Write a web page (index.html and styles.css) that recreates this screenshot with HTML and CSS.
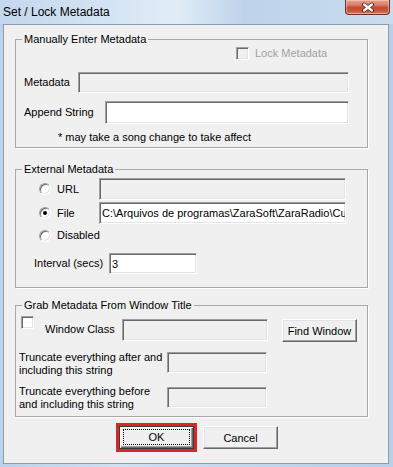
FILE: index.html
```html
<!DOCTYPE html>
<html lang="en">
<head>
  <meta charset="UTF-8">
  <meta name="viewport" content="width=device-width, initial-scale=1.0">
  <title>Set / Lock Metadata</title>
  <link rel="stylesheet" href="styles.css">
</head>
<body>
  <div class="window">
    <div class="titlebar">
      <span class="title">Set / Lock Metadata</span>
      <span class="close">
        <svg width="14" height="11" viewBox="-7 -5.5 14 11">
          <path d="M-4 -3 L4 3 M4 -3 L-4 3" stroke="#5a2b22" stroke-width="4" stroke-linecap="round"/>
          <path d="M-4 -3 L4 3 M4 -3 L-4 3" stroke="#fff" stroke-width="2.2" stroke-linecap="round"/>
        </svg>
      </span>
    </div>

    <div class="client">
      <fieldset class="group g-manual">
        <legend>Manually Enter Metadata</legend>
        <div class="lock-row">
          <span class="check disabled"></span>
          <span class="dim">Lock Metadata</span>
        </div>
        <div class="row meta-row">
          <label>Metadata</label>
          <input class="edit off w-meta" type="text" readonly>
        </div>
        <div class="row append-row">
          <label>Append String</label>
          <input class="edit w-append" type="text">
        </div>
        <div class="note">* may take a song change to take affect</div>
      </fieldset>

      <fieldset class="group g-external">
        <legend>External Metadata</legend>
        <div class="row opt-row">
          <span class="radio"></span>
          <label class="opt">URL</label>
          <input class="edit off w-path" type="text" readonly>
        </div>
        <div class="row opt-row">
          <span class="radio on"></span>
          <label class="opt">File</label>
          <input class="edit w-path" type="text" value="C:\Arquivos de programas\ZaraSoft\ZaraRadio\Current.txt">
        </div>
        <div class="row opt-row small">
          <span class="radio"></span>
          <label class="opt">Disabled</label>
        </div>
        <div class="row interval-row">
          <label class="lbl-interval">Interval (secs)</label>
          <input class="edit w-interval" type="text" value="3">
        </div>
      </fieldset>

      <fieldset class="group g-grab">
        <legend>Grab Metadata From Window Title</legend>
        <div class="grab-row class-row">
          <span class="check"></span>
          <label class="lbl-class">Window Class</label>
          <input class="edit off w-class" type="text" readonly>
          <button class="btn find" type="button">Find Window</button>
        </div>
        <div class="grab-row trunc-row">
          <label class="lbl-trunc">Truncate everything after and<br>including this string</label>
          <input class="edit off w-trunc" type="text" readonly>
        </div>
        <div class="grab-row trunc-row">
          <label class="lbl-trunc">Truncate everything before<br>and including this string</label>
          <input class="edit off w-trunc low" type="text" readonly>
        </div>
      </fieldset>

      <div class="actions">
        <span class="highlight">
          <button class="btn default" type="button"><span class="focus">OK</span></button>
        </span>
        <button class="btn" type="button">Cancel</button>
      </div>
    </div>
  </div>
</body>
</html>
```

FILE: styles.css
```css
html, body { margin: 0; padding: 0; }
body { width: 393px; height: 467px; overflow: hidden; font-family: "Liberation Sans", Arial, sans-serif; font-size: 11px; color: #000; }

.window { height: 467px; display: flex; flex-direction: column; background: linear-gradient(to right, #bcd2ea, #cfe0f2 30%, #c4d8ee 60%, #b8cfe8); }
.titlebar { height: 24px; flex: none; display: flex; align-items: flex-start; justify-content: space-between; background: linear-gradient(to right, #c3d7ed 0%, #d3e3f3 25%, #e1ecf7 45%, #bed3ea 62%, #c9dcef 100%); }
.title { font-family: "Liberation Sans", Arial, sans-serif; font-size: 12px; padding: 5px 0 0 3px; color: #000; }
.close { width: 43px; height: 14px; margin-right: 3px; display: flex; align-items: center; justify-content: center; border: 1px solid #6b3228; border-top: none; border-radius: 0 0 4px 4px; background: linear-gradient(to bottom, #e8a594 0%, #d77d69 35%, #c24a31 55%, #c8573c 80%, #e0806a 100%); box-shadow: inset 0 0 0 1px rgba(255,220,210,0.45); }

.client { flex: 1; margin: 0 4px 3px 3px; border: 1px solid #8a9db3; background: #f0f0f0; padding: 0 20px 0 11px; display: flex; flex-direction: column; }

.group { margin: 0; padding: 0; border: 1px solid #a8a8a8; box-shadow: 1px 1px 0 #fff; min-width: 0; }
.group legend { padding: 0 2px; line-height: 13px; }
.g-manual { margin-top: 8px; padding: 0 18px 3px 8px; }
.g-manual legend { margin-left: -2px; }
.g-external { margin-top: 15px; padding: 0 21px 13px 18px; }
.g-external legend { margin-left: -12px; }
.g-grab { margin-top: 11px; padding: 0 10px 6px 3px; }
.g-grab legend { margin-left: 3px; }

.row { display: flex; align-items: center; }
label { line-height: 13px; white-space: nowrap; }

.lock-row { display: flex; align-items: center; height: 13px; margin-top: 1px; padding-left: 212px; }
.lock-row .check { margin-right: 6px; }
.dim { color: #a0a0a0; line-height: 13px; }

.meta-row { height: 21px; margin-top: 12px; }
.append-row { height: 23px; margin-top: 8px; }
.note { margin-top: 7px; line-height: 13px; padding-left: 34px; }

.edit { box-sizing: border-box; margin: 0; padding: 0 0 0 2px; font: inherit; font-size: 11px; color: #000; background: #fff; border: 1px solid; border-color: #a0a0a0 #fff #fff #a0a0a0; box-shadow: inset 1px 1px 0 #696969, inset -1px -1px 0 #e3e3e3; outline: none; }
.edit.off { background: #f0f0f0; }
.w-meta { width: 271px; height: 21px; margin-left: auto; }
.w-append { width: 244px; height: 23px; margin-left: auto; }
.w-path { width: 247px; height: 22px; margin-left: auto; }
.w-interval { width: 88px; height: 21px; }

.opt-row { height: 22px; margin-top: 2px; padding-left: 5px; }
.opt-row.small { height: 13px; margin-top: 5px; }
.opt { margin-left: 6px; }
.interval-row { height: 21px; margin-top: 11px; }
.lbl-interval { width: 75px; }

.radio { position: relative; box-sizing: border-box; width: 12px; height: 12px; flex: none; border-radius: 50%; background: #fff; border: 1px solid; border-color: #a0a0a0 #fff #fff #a0a0a0; box-shadow: inset 1px 1px 0 #696969, inset -1px -1px 0 #e3e3e3; }
.radio.on::after { content: ""; position: absolute; left: 3px; top: 3px; width: 4px; height: 4px; border-radius: 50%; background: #000; }

.check { box-sizing: border-box; width: 13px; height: 13px; flex: none; background: #fff; border: 1px solid; border-color: #a0a0a0 #fff #fff #a0a0a0; box-shadow: inset 1px 1px 0 #696969, inset -1px -1px 0 #e3e3e3; }
.check.disabled { background: #f0f0f0; }

.grab-row { display: flex; align-items: flex-start; height: 26px; }
.class-row { margin-top: 4px; padding-left: 2px; }
.lbl-class { margin: 7px 0 0 11px; width: 77px; }
.w-class { width: 146px; height: 22px; margin-top: 3px; }
.trunc-row { margin-top: 8px; }
.lbl-trunc { width: 148px; margin-top: 1px; }
.w-trunc { width: 100px; height: 21px; margin-top: 2px; }
.w-trunc.low { margin-top: 3px; }

.btn { box-sizing: border-box; width: 75px; height: 23px; margin: 0; padding: 0; font: inherit; font-size: 11px; color: #000; background: #f0f0f0; border: 1px solid; border-color: #fff #696969 #696969 #fff; box-shadow: inset -1px -1px 0 #a0a0a0, inset 1px 1px 0 #e3e3e3; }
.find { margin: 3px 0 0 14px; }

.actions { display: flex; align-items: center; justify-content: center; gap: 6px; margin-top: 6px; padding-left: 11px; }
.highlight { display: flex; border: 3px solid #d8262e; }
.btn.default { display: flex; padding: 2px 3px 3px 3px; border: 1px solid #3c3c3c; box-shadow: inset 1px 1px 0 #fff, inset -1px -1px 0 #696969, inset -2px -2px 0 #a0a0a0; }
.focus { flex: 1; display: flex; align-items: center; justify-content: center; border: 1px dotted #000; }
```
